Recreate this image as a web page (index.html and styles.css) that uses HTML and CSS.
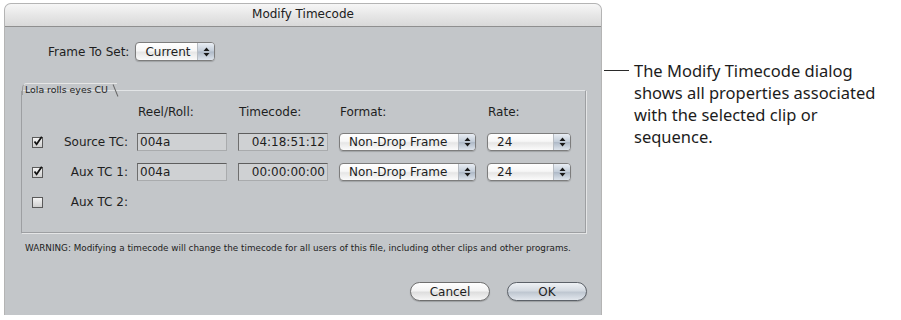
FILE: index.html
```html
<!DOCTYPE html>
<html lang="en">
<head>
    <meta charset="UTF-8">
    <title>Modify Timecode</title>
    <link rel="stylesheet" href="styles.css">
</head>
<body>

    <div class="page">

        <!-- Dialog -->
        <div class="dialog">
            <div class="titlebar">Modify Timecode</div>

            <div class="dialog-body">
                <div class="frame-row">
                    <span class="frame-label">Frame To Set:</span>
                    <div class="popup popup-current">
                        <span class="popup-text">Current</span>
                        <span class="popup-arrows">
                            <svg width="7" height="10" viewBox="0 0 7 10"><path d="M3.5 0.5 L6.5 4 L0.5 4 Z M3.5 9.5 L6.5 6 L0.5 6 Z" fill="#1a1a1a"/></svg>
                        </span>
                    </div>
                </div>

                <div class="tab-strip">
                    <span class="tab">Lola rolls eyes CU</span>
                </div>

                <div class="tc-box">
                    <div class="tc-grid">
                        <!-- header -->
                        <span></span>
                        <span></span>
                        <span class="col-head">Reel/Roll:</span>
                        <span class="col-head">Timecode:</span>
                        <span class="col-head">Format:</span>
                        <span class="col-head">Rate:</span>

                        <!-- Source TC -->
                        <span class="checkbox checked">
                            <svg width="11" height="11" viewBox="0 0 11 11"><path d="M2.5 5.5 L4.6 8.3 L9.8 0.8" fill="none" stroke="#111" stroke-width="1.8"/></svg>
                        </span>
                        <span class="row-label">Source TC:</span>
                        <span class="field">004a</span>
                        <span class="field field-tc">04:18:51:12</span>
                        <div class="popup">
                            <span class="popup-text">Non-Drop Frame</span>
                            <span class="popup-arrows">
                                <svg width="7" height="10" viewBox="0 0 7 10"><path d="M3.5 0.5 L6.5 4 L0.5 4 Z M3.5 9.5 L6.5 6 L0.5 6 Z" fill="#1a1a1a"/></svg>
                            </span>
                        </div>
                        <div class="popup">
                            <span class="popup-text">24</span>
                            <span class="popup-arrows">
                                <svg width="7" height="10" viewBox="0 0 7 10"><path d="M3.5 0.5 L6.5 4 L0.5 4 Z M3.5 9.5 L6.5 6 L0.5 6 Z" fill="#1a1a1a"/></svg>
                            </span>
                        </div>

                        <!-- Aux TC 1 -->
                        <span class="checkbox checked">
                            <svg width="11" height="11" viewBox="0 0 11 11"><path d="M2.5 5.5 L4.6 8.3 L9.8 0.8" fill="none" stroke="#111" stroke-width="1.8"/></svg>
                        </span>
                        <span class="row-label">Aux TC 1:</span>
                        <span class="field">004a</span>
                        <span class="field field-tc">00:00:00:00</span>
                        <div class="popup">
                            <span class="popup-text">Non-Drop Frame</span>
                            <span class="popup-arrows">
                                <svg width="7" height="10" viewBox="0 0 7 10"><path d="M3.5 0.5 L6.5 4 L0.5 4 Z M3.5 9.5 L6.5 6 L0.5 6 Z" fill="#1a1a1a"/></svg>
                            </span>
                        </div>
                        <div class="popup">
                            <span class="popup-text">24</span>
                            <span class="popup-arrows">
                                <svg width="7" height="10" viewBox="0 0 7 10"><path d="M3.5 0.5 L6.5 4 L0.5 4 Z M3.5 9.5 L6.5 6 L0.5 6 Z" fill="#1a1a1a"/></svg>
                            </span>
                        </div>

                        <!-- Aux TC 2 -->
                        <span class="checkbox"></span>
                        <span class="row-label">Aux TC 2:</span>
                    </div>
                </div>

                <p class="warning">WARNING: Modifying a timecode will change the timecode for all users of this file, including other clips and other programs.</p>

                <div class="buttons">
                    <button class="aqua-btn">Cancel</button>
                    <button class="aqua-btn default">OK</button>
                </div>
            </div>
        </div>

        <!-- Keterangan -->
        <div class="callout">
            <span class="callout-line"></span>
            <p class="callout-text">The Modify Timecode dialog shows all properties associated with the selected clip or sequence.</p>
        </div>

    </div>

</body>
</html>
```

FILE: styles.css
```css
/* General */
body {
    margin: 0;
    padding: 0;
    background-color: #ffffff;
    font-family: 'DejaVu Sans', sans-serif;
    color: #1e1e1e;
}

.page {
    display: flex;
    align-items: flex-start;
}

/* Dialog */
.dialog {
    width: 598px;
    height: 312px;
    margin: 3px 0 0 4px;
    border: 1px solid #b4b4b4;
    border-bottom: none;
    border-radius: 7px 7px 0 0;
    box-sizing: border-box;
    background-color: #c3c6c9;
    overflow: hidden;
    display: flex;
    flex-direction: column;
}

.titlebar {
    height: 22px;
    line-height: 21px;
    text-align: center;
    font-size: 12px;
    color: #202020;
    background: linear-gradient(#f6f6f6, #e4e4e4 60%, #d9d9d9);
    border-bottom: 1px solid #8f8f8f;
}

.dialog-body {
    flex-grow: 1;
    padding: 15px 15px 0 16px;
}

.frame-row {
    display: flex;
    align-items: center;
    height: 19px;
    padding-left: 27px;
}

.frame-label {
    font-size: 12px;
    margin-right: 6px;
}

/* Popup menu */
.popup {
    display: flex;
    align-items: center;
    height: 18px;
    box-sizing: border-box;
    border: 1px solid #7d7d7d;
    border-radius: 4px;
    background: linear-gradient(#ffffff, #f7f7f7 45%, #e6e6e6 55%, #fbfbfb);
    box-shadow: 0 1px 1px rgba(0, 0, 0, 0.18);
    overflow: hidden;
}

.popup-current {
    width: 80px;
    height: 19px;
}

.popup-text {
    flex-grow: 1;
    padding-left: 9px;
    font-size: 12px;
    white-space: nowrap;
}

.popup-arrows {
    width: 16px;
    height: 100%;
    display: flex;
    align-items: center;
    justify-content: center;
    background: linear-gradient(#e9eef4, #c2ccd8 48%, #aeb9c7 52%, #dde4ec);
    border-left: 1px solid #b7bcc2;
}

/* Tab */
.tab-strip {
    margin-top: 17px;
    height: 12px;
    padding-left: 1px;
}

.tab {
    position: relative;
    display: inline-block;
    height: 12px;
    line-height: 12px;
    padding: 0 9px 0 2px;
    font-size: 9.4px;
    color: #222;
    border-left: 1px solid #9c9c9c;
    border-top: 1px solid #e6e6e6;
    border-radius: 5px 0 0 0;
    box-sizing: border-box;
}

.tab::after {
    content: "";
    position: absolute;
    right: 1px;
    top: 0;
    width: 1px;
    height: 13px;
    background-color: #6a6a6a;
    transform: rotate(-22deg);
}

.tc-box {
    height: 143px;
    box-sizing: border-box;
    border: 1px solid #9d9fa2;
    border-top-color: #e2e4e6;
    box-shadow: 1px 1px 0 #e4e5e6;
    padding: 6px 0 0 10px;
}

.tc-grid {
    display: grid;
    grid-template-columns: 11px 72px 90px 90px 137px 84px;
    grid-auto-rows: 30px;
    column-gap: 11px;
    align-items: center;
}

.col-head {
    font-size: 12px;
    padding-left: 1px;
}

.row-label {
    font-size: 12px;
    text-align: right;
    margin-right: -2px;
}

.checkbox {
    width: 11px;
    height: 11px;
    box-sizing: border-box;
    border: 1px solid #5a5a5a;
    background: linear-gradient(#f4f4f4, #cfcfcf);
    position: relative;
}

.checkbox svg {
    position: absolute;
    left: -1px;
    top: -2px;
}

.field {
    height: 18px;
    line-height: 17px;
    box-sizing: border-box;
    font-size: 12px;
    padding: 0 2px;
    background-color: #cfd1d3;
    border: 1px solid #a9abad;
    border-top-color: #5e5e5e;
    border-left-color: #6e6e6e;
}

.field-tc {
    text-align: right;
}

/* Warning & buttons */
.warning {
    margin: 10px 0 0 4px;
    font-size: 8.8px;
    line-height: 11px;
    color: #222;
    white-space: nowrap;
}

.buttons {
    display: flex;
    justify-content: flex-end;
    gap: 17px;
    margin-top: 28px;
    margin-right: -1px;
}

.aqua-btn {
    width: 80px;
    height: 19px;
    padding: 0;
    border: 1px solid #6f6f6f;
    border-radius: 10px;
    font-family: 'DejaVu Sans', sans-serif;
    font-size: 12px;
    color: #1e1e1e;
    background: linear-gradient(#ffffff, #f3f3f3 45%, #dedede 55%, #f6f6f6);
    box-shadow: 0 1px 1px rgba(0, 0, 0, 0.2);
}

.aqua-btn.default {
    background: linear-gradient(#eef1f4, #d4dae1 45%, #bfc7d1 55%, #e2e7ed);
    border-color: #5c6168;
}

/* Callout */
.callout {
    display: flex;
    align-items: flex-start;
    margin-top: 60px;
    margin-left: 2px;
}

.callout-line {
    width: 25px;
    height: 1px;
    margin-top: 10px;
    margin-right: 5px;
    background-color: #2a2a2a;
}

.callout-text {
    margin: 0;
    width: 262px;
    font-family: 'Noto Sans', sans-serif;
    font-size: 16.5px;
    line-height: 22px;
    color: #1c1c1c;
}
```
